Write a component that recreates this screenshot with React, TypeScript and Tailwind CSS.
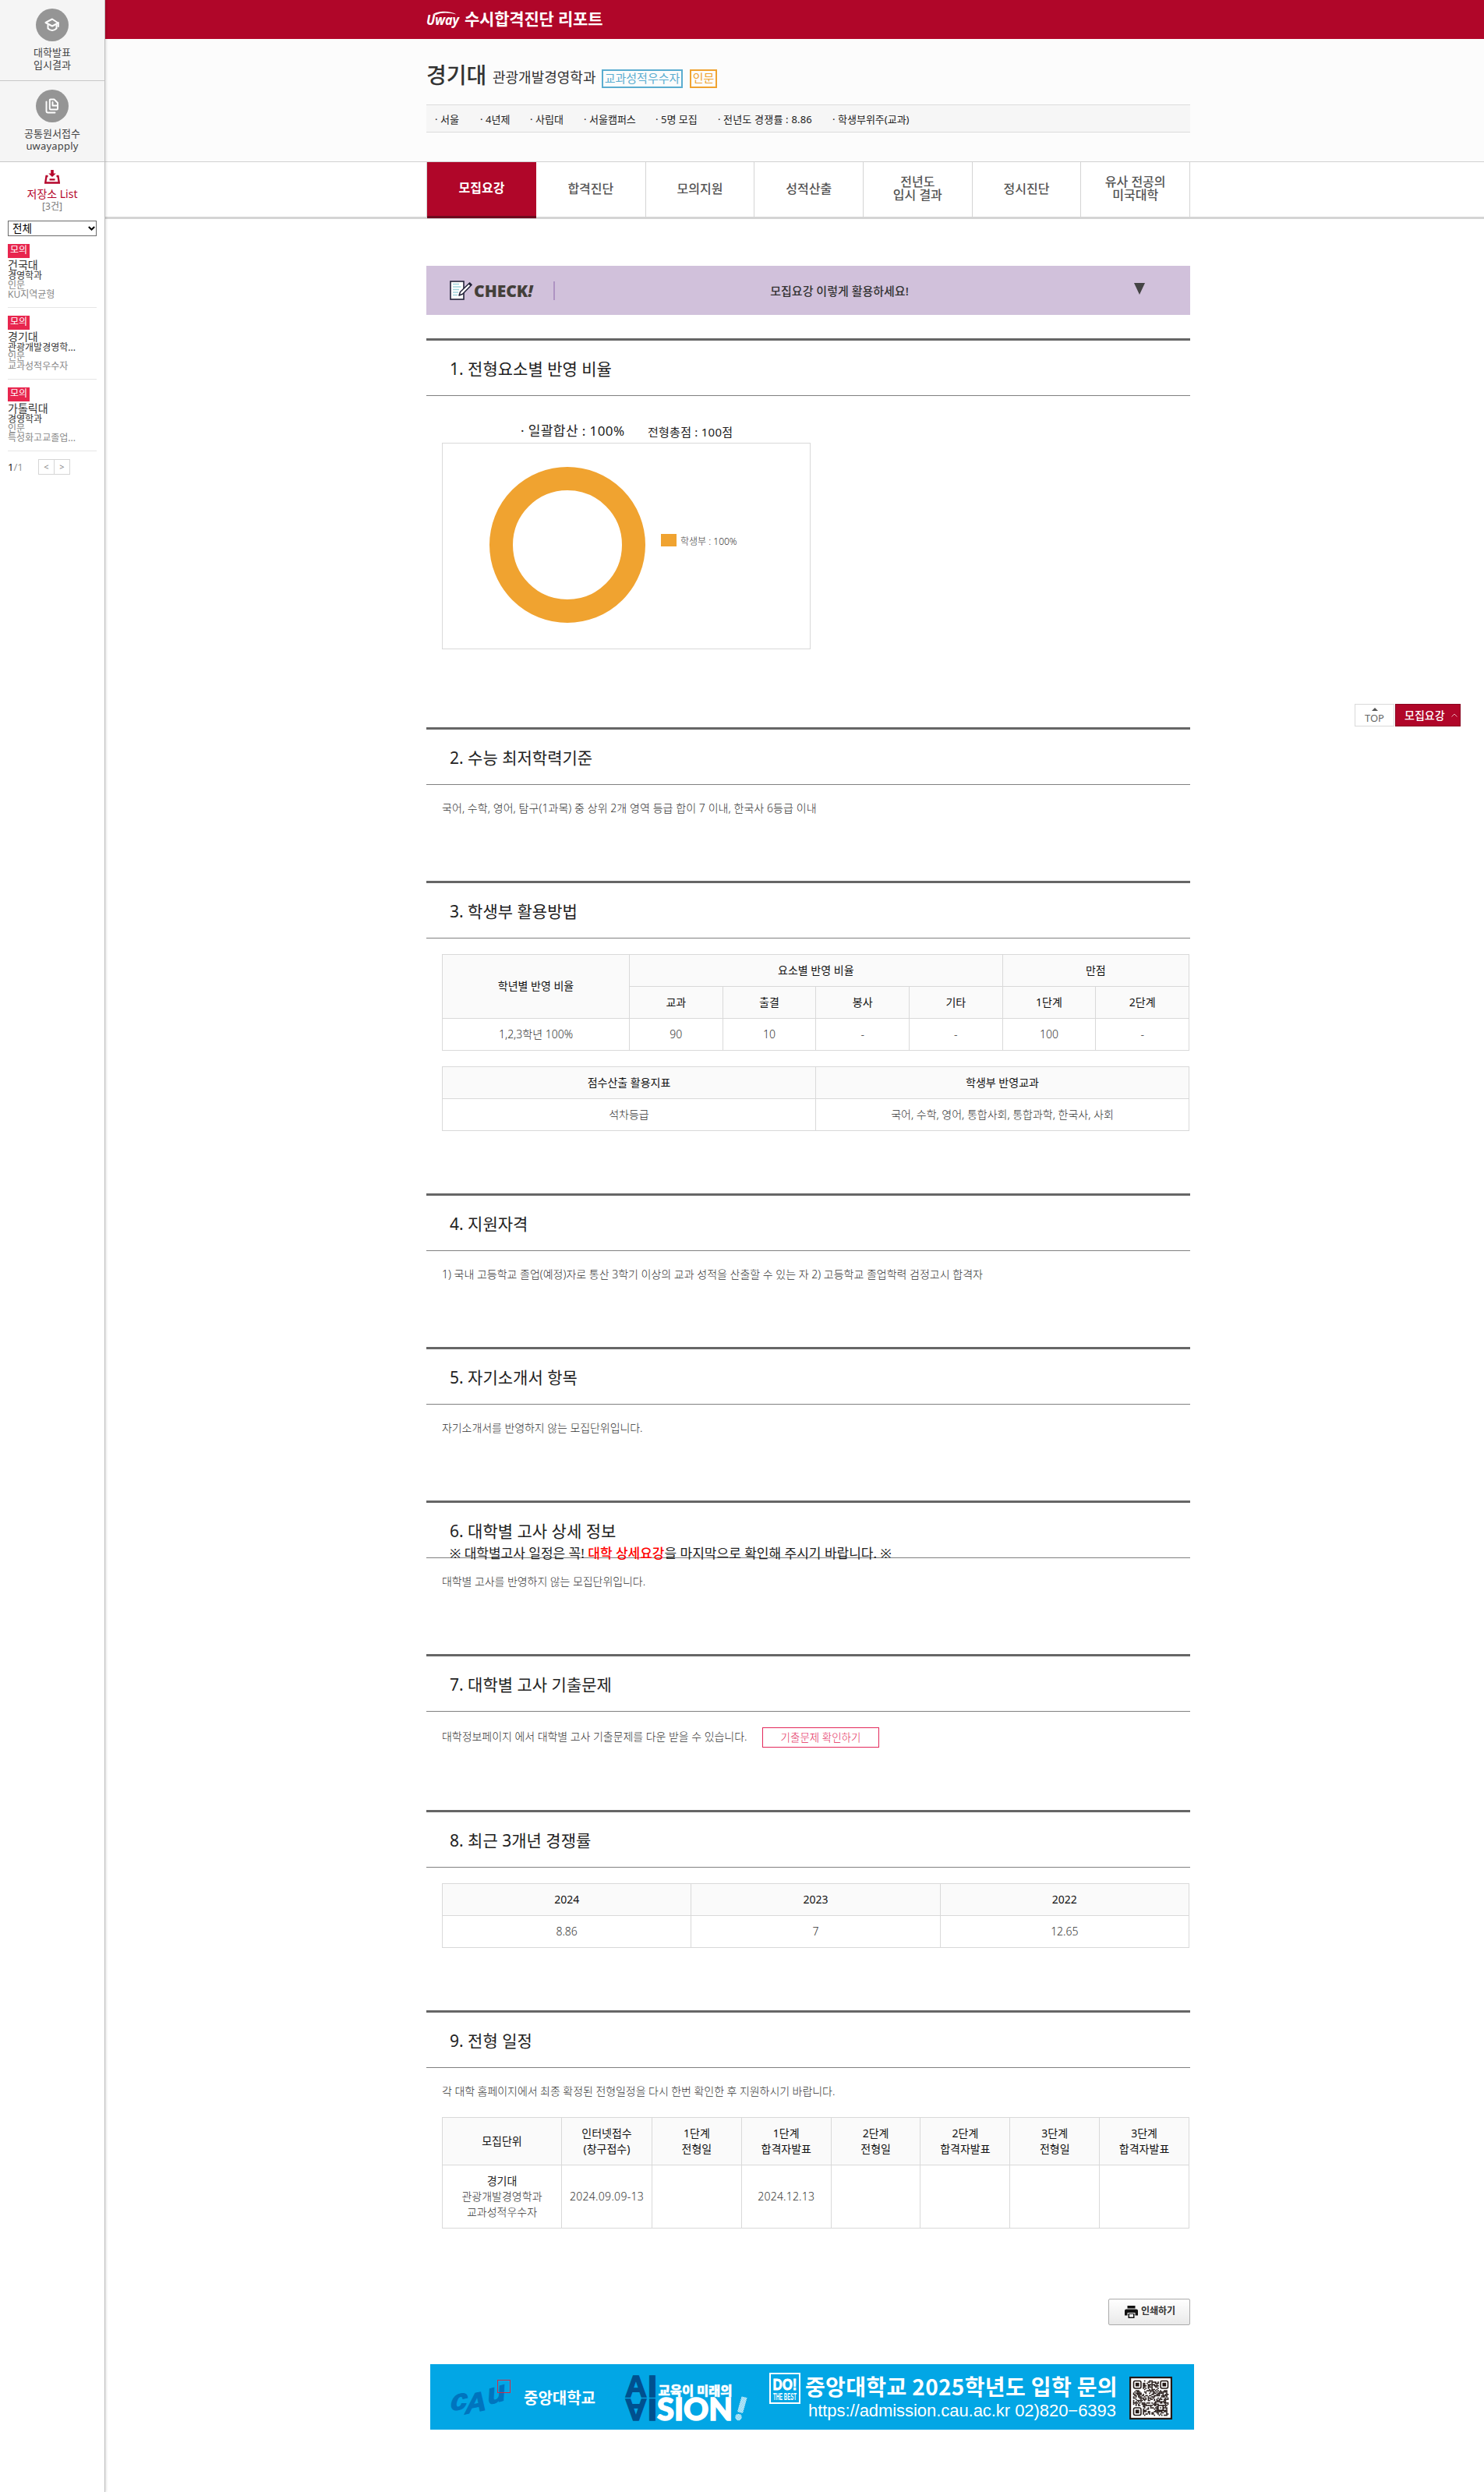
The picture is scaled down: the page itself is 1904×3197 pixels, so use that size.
import React from "react";

const tabs = ["합격진단", "모의지원", "성적산출", "전년도\n입시 결과", "정시진단", "유사 전공의\n미국대학"];

const facts = [
  { text: "서울", cls: "w-[58px]" },
  { text: "4년제", cls: "w-[64px]" },
  { text: "사립대", cls: "w-[69px]" },
  { text: "서울캠퍼스", cls: "w-[92px]" },
  { text: "5명 모집", cls: "w-[80px]" },
  { text: "전년도 경쟁률 : 8.86", cls: "w-[147px] tracking-[0.2px]" },
  { text: "학생부위주(교과)", cls: "" },
];

const saved = [
  { univ: "건국대", dept: "경영학과", type: "KU지역균형" },
  { univ: "경기대", dept: "관광개발경영학...", type: "교과성적우수자" },
  { univ: "가톨릭대", dept: "경영학과", type: "특성화고교졸업..." },
];

const schedule = [
  "인터넷접수\n(창구접수)",
  "1단계\n전형일",
  "1단계\n합격자발표",
  "2단계\n전형일",
  "2단계\n합격자발표",
  "3단계\n전형일",
  "3단계\n합격자발표",
];

function Section({ title, height, note, children }: { title: string; height: string; note?: React.ReactNode; children: React.ReactNode }) {
  return (
    <section className={height}>
      <div className="relative h-[74px] border-t-[3px] border-b border-t-[#666] border-b-[#808080] pl-[30px]">
        <h2 className="pt-px text-[21px] leading-[70px] text-[#222]">{title}</h2>
        {note}
      </div>
      <div className="pl-5">{children}</div>
    </section>
  );
}

function Body({ children, cls = "pt-[19px]" }: { children: React.ReactNode; cls?: string }) {
  return <p className={"text-[14px] leading-[22px] font-light whitespace-nowrap text-[#333] " + cls}>{children}</p>;
}

function Th({ children, ...rest }: React.ThHTMLAttributes<HTMLTableCellElement>) {
  return (
    <th {...rest} className="border border-[#d9d9d9] bg-[#fafafa] p-0 pb-px text-[14px] leading-5 font-normal whitespace-pre-line text-[#111]">
      {children}
    </th>
  );
}

function Td({ children }: { children?: React.ReactNode }) {
  return <td className="border border-[#d9d9d9] p-0 pb-px text-center text-[14px] leading-5 font-light whitespace-pre-line text-[#333]">{children}</td>;
}

function UwayLogo() {
  return (
    <svg width="44" height="24" viewBox="0 0 44 24" className="shrink-0 overflow-visible">
      <text x="0" y="18" fontSize="18" fontWeight="700" fontStyle="italic" fill="#fff" fontFamily="'Open Sans', sans-serif" textLength="42" lengthAdjust="spacingAndGlyphs">
        Uway
      </text>
      <path d="M8 4.500C14 0 30 -1 38.500 4.500 30 1.800 19 1.500 12.500 5Z" fill="#fff" />
    </svg>
  );
}

function CapIcon() {
  return (
    <svg width="20" height="18" viewBox="0 0 20 18" fill="none" stroke="#fff" strokeWidth="2" strokeLinejoin="round" strokeLinecap="round">
      <path d="M10 1.500 1.500 6 10 10.500 17.500 6.500Z" />
      <path d="M17.800 6v5M4.500 9v4.500Q10 18.500 15.500 13.500V9" />
    </svg>
  );
}

function FilesIcon() {
  return (
    <svg width="18" height="20" viewBox="0 0 18 20" fill="none" stroke="#fff" strokeWidth="1.900" strokeLinejoin="round" strokeLinecap="round">
      <path d="M5.800 2.500Q5.800 1.500 6.800 1.500h4.700l4.500 4.500v7.500q0 1-1 1H6.800q-1 0-1-1Z" />
      <path d="M9.500 5v4.500H15" />
      <path d="M1.500 4.500v12Q1.500 18.500 3.500 18.500H12.500" />
    </svg>
  );
}

function SaveIcon() {
  return (
    <svg width="20" height="18" viewBox="0 0 20 18">
      <path d="M8.200 0h3.600v4.500h2.900L10 9 5.300 4.500h2.900Z" fill="#b5062b" />
      <path d="M4.500 8H2.500L1.200 16.500H18.800L17.500 8H15.500M6.500 12.300h7" fill="none" stroke="#b5062b" strokeWidth="2.300" />
    </svg>
  );
}

function CheckIcon() {
  return (
    <svg width="29" height="25" viewBox="0 0 29 25">
      <rect x="1" y="1" width="17" height="23" fill="#fff" stroke="#23233a" strokeWidth="1.600" />
      <path d="M4 4.500h8M4 8h10.500M4 11.500h8M4 15h7M4 18.500h6" stroke="#9fd3dc" strokeWidth="1.500" />
      <path d="M25.500 3 13.500 14.500l-1.500 4.500 4.500-1.700L28 5.500Z" fill="#fff" stroke="#23233a" strokeWidth="1.500" strokeLinejoin="round" />
      <path d="M24 4.500 26.800 7.200 28.600 5 25.800 2.200Z" fill="#23233a" />
    </svg>
  );
}

function Donut() {
  return (
    <svg width="200" height="200" viewBox="0 0 200 200" className="mb-[3px]">
      <circle cx="100" cy="100" r="85" fill="none" stroke="#f0a330" strokeWidth="30" />
    </svg>
  );
}

function CauLogo() {
  return (
    <svg width="84" height="50" viewBox="0 0 84 50" className="overflow-visible">
      <g fill="#0074be" stroke="#0074be" strokeWidth="1.200" fontFamily="'Liberation Sans', sans-serif" fontStyle="italic" fontWeight="700">
        <text transform="translate(1 42) rotate(-10) skewX(-12)" fontSize="36" textLength="22" lengthAdjust="spacingAndGlyphs">c</text>
        <text transform="translate(20 46) rotate(-12) skewX(-10)" fontSize="34" textLength="28" lengthAdjust="spacingAndGlyphs">A</text>
        <text transform="translate(50 34) rotate(-16) skewX(-8)" fontSize="36" textLength="24" lengthAdjust="spacingAndGlyphs">u</text>
      </g>
      <rect x="61.500" y="2.500" width="16" height="16" fill="none" stroke="#d22d45" />
    </svg>
  );
}

function AisionLogo() {
  return (
    <svg width="160" height="62" viewBox="0 0 160 62" className="overflow-visible">
      <defs>
        <pattern id="dots" width="2" height="2" patternUnits="userSpaceOnUse">
          <rect width="2" height="2" fill="#4dc0ec" />
          <rect width="1" height="1" fill="#fff" />
          <rect x="1" y="1" width="1" height="1" fill="#fff" />
        </pattern>
      </defs>
      <g fill="#00508f" stroke="#00508f" strokeWidth="1.500" fontFamily="'Liberation Sans', sans-serif" fontWeight="700" fontSize="39">
        <text x="1" y="29.500" textLength="28" lengthAdjust="spacingAndGlyphs">A</text>
        <text x="30" y="29.500" textLength="12" lengthAdjust="spacingAndGlyphs">I</text>
        <g transform="translate(0 62) scale(1 -1)">
          <text x="1" y="29.500" textLength="28" lengthAdjust="spacingAndGlyphs">A</text>
          <text x="30" y="29.500" textLength="12" lengthAdjust="spacingAndGlyphs">I</text>
        </g>
      </g>
      <text x="43.500" y="28" fill="#fff" stroke="#fff" strokeWidth=".4" fontFamily="'Noto Sans CJK KR', sans-serif" fontWeight="900" fontSize="16" textLength="95" lengthAdjust="spacingAndGlyphs">
        교육이 미래의
      </text>
      <text x="42" y="60" fill="#fff" stroke="#fff" strokeWidth="1.500" fontFamily="'Lato', sans-serif" fontWeight="900" fontSize="39.500" textLength="97" lengthAdjust="spacingAndGlyphs">
        SION
      </text>
      <path d="M150.500 29.500 157.500 31 152 51 145 49Z" fill="url(#dots)" />
      <circle cx="146.500" cy="56" r="4.200" fill="url(#dots)" />
    </svg>
  );
}

function QrCode() {
  const n = 29;
  const cells: React.ReactNode[] = [];
  let seed = 20258;
  const inFinder = (x: number, y: number) => (x < 8 && y < 8) || (x > 20 && y < 8) || (x < 8 && y > 20) || (x > 19 && x < 25 && y > 19 && y < 25);
  for (let y = 0; y < n; y++)
    for (let x = 0; x < n; x++) {
      seed = (seed * 1103515245 + 12345) % 2147483648;
      if (!inFinder(x, y) && (seed >> 12) % 100 < 52) cells.push(<rect key={`${x}-${y}`} x={x} y={y} width="1.050" height="1.050" />);
    }
  return (
    <svg width="55" height="55" viewBox="-3 -3 35 35" fill="#231815" className="shrink-0">
      <rect x="-3" y="-3" width="35" height="35" />
      <rect x="-1.600" y="-1.600" width="32.200" height="32.200" fill="#fff" />
      {cells}
      {[[0, 0], [22, 0], [0, 22]].map(([x, y]) => (
        <g key={`${x}${y}`}>
          <rect x={x + 0.5} y={y + 0.5} width="6" height="6" rx="1.200" fill="none" stroke="#231815" />
          <rect x={x + 2} y={y + 2} width="3" height="3" />
        </g>
      ))}
      <rect x="20.500" y="20.500" width="4" height="4" fill="none" stroke="#231815" />
      <rect x="22" y="22" width="1" height="1" />
    </svg>
  );
}

function Sidebar() {
  return (
    <aside className="z-10 w-[135px] shrink-0 border-r border-[#bfbfbf] bg-white shadow-[1px_0_3px_rgba(0,0,0,0.15)]">
      <div className="h-[104px] border-b border-[#c8c8c8] bg-[#f5f5f5] pt-[11px] text-center text-[13px] leading-4 text-[#444]">
        <div className="mx-auto mb-[6px] flex size-[42px] items-center justify-center rounded-full bg-[#959595]">
          <CapIcon />
        </div>
        대학발표
        <br />
        입시결과
      </div>
      <div className="h-[104px] border-b border-[#c8c8c8] bg-[#f5f5f5] pt-[11px] text-center text-[13px] leading-4 text-[#444]">
        <div className="mx-auto mb-[6px] flex size-[42px] items-center justify-center rounded-full bg-[#959595]">
          <FilesIcon />
        </div>
        공통원서접수
        <br />
        <span className="tracking-[0.2px]">uwayapply</span>
      </div>
      <div className="flex h-[75px] flex-col items-center pt-[10px]">
        <SaveIcon />
        <p className="mt-[4px] text-[14px] leading-[18px] text-[#b5062b]">저장소 List</p>
        <p className="text-[12px] leading-[14px] text-[#777]">[3건]</p>
      </div>
      <div className="ml-[10px] w-[114px]">
        <div className="flex h-5 items-center justify-between border border-[#6b6b6b] bg-white pr-px pl-[5px] text-[13.500px] leading-[18px] text-black">
          전체
          <svg width="9" height="6" viewBox="0 0 9 6" fill="none" stroke="#000" strokeWidth="2">
            <path d="M.8 1 4.500 4.500 8.200 1" />
          </svg>
        </div>
        {saved.map((s) => (
          <div key={s.univ} className="h-[92px] border-b border-[#e5e5e5] pt-[10px] text-[12px] leading-3 whitespace-nowrap">
            <span className="flex h-[18px] w-7 justify-center bg-[#e8264e] text-[12px] leading-[15px] text-white">모의</span>
            <p className="mt-[2px] text-[14px] leading-[14px] text-[#333]">{s.univ}</p>
            <p className="mt-px text-[12px] leading-3 text-[#333]">{s.dept}</p>
            <p className="text-[12px] leading-3 text-[#888]">{"인문"}</p>
            <p className="text-[12px] leading-3 text-[#888]">{s.type}</p>
          </div>
        ))}
        <div className="mt-[10px] flex items-center">
          <p className="w-[39px] text-[13px] leading-5 text-[#999]">
            <span className="text-[#222]">1</span>/1
          </p>
          <span className="h-5 w-[21px] border border-[#d5d5d5] text-center text-[11px] leading-[18px] text-[#888]">&lt;</span>
          <span className="-ml-px h-5 w-[21px] border border-[#d5d5d5] text-center text-[11px] leading-[18px] text-[#888]">&gt;</span>
        </div>
      </div>
    </aside>
  );
}

export default function App() {
  return (
    <div className="relative flex h-[3197px] w-[1904px] overflow-hidden bg-white font-['Noto_Sans','Noto_Sans_CJK_KR',sans-serif]">
      <Sidebar />
      <div className="flex-1">
        <header className="h-[50px] bg-[#b00629] pl-[412px]">
          <div className="flex items-start pt-[14px]">
            <UwayLogo />
            <h1 className="-mt-px ml-[5px] text-[21px] leading-[22px] font-bold tracking-[-0.200px] text-white">수시합격진단 리포트</h1>
          </div>
        </header>

        <div className="h-[158px] border-b border-[#d2d2d2] bg-[#fcfcfc] pl-[412px]">
          <div className="flex items-start pt-[31px] whitespace-nowrap text-[#333]">
            <h2 className="w-[85px] text-[28px] leading-[30px] font-medium">경기대</h2>
            <p className="w-[140px] pt-[6px] text-[18px] leading-6">관광개발경영학과</p>
            <span className="mt-2 h-6 w-[104px] border-2 border-[#5badd0] text-center text-[15px] leading-[18px] text-[#5badd0]">교과성적우수자</span>
            <span className="mt-2 ml-[9px] h-6 w-[35px] border-2 border-[#f0a330] text-center text-[15px] leading-[18px] text-[#f0a330]">인문</span>
          </div>
          <ul className="mt-[21px] flex h-9 w-[980px] border-y border-[#dcdcdc] bg-[#f6f6f6] pl-[11px] text-[13px] leading-[36px] whitespace-nowrap text-[#222]">
            {facts.map((f) => (
              <li key={f.text} className={f.cls}>
                <span className="inline-block w-[7px]">·</span>
                {f.text}
              </li>
            ))}
          </ul>
        </div>

        <nav className="h-[73px] border-b-[3px] border-[#d4d4d4] pl-[412px]">
          <div className="flex h-[70px] w-[980px] border-x border-[#d4d4d4] text-center text-[16px] leading-[17px] font-medium whitespace-pre-line text-[#555]">
            <div className="flex h-[72px] w-[140px] items-center justify-center border-b-[3px] border-[#6d0a1e] bg-[#b00629] pb-[2px] font-bold text-white">모집요강</div>
            <div className="grid flex-1 grid-cols-6">
              {tabs.map((t, i) => (
                <div key={t} className={"flex items-center justify-center pb-[2px] " + (i === 0 ? "" : "border-l border-[#d4d4d4]")}>
                  {t}
                </div>
              ))}
            </div>
          </div>
        </nav>

        <main className="ml-[412px] w-[980px] pt-[60px]">
          <div className="mb-[30px] flex h-[63px] items-center bg-[#d1c1db] pl-[30px] text-[#333]">
            <CheckIcon />
            <span className="ml-[2px] w-[81px] text-[21px] leading-6 font-extrabold text-[#44403a] font-['Open_Sans',sans-serif]">
              CHECK<i>!</i>
            </span>
            <span className="ml-[21px] h-6 w-[2px] bg-[#ae93c2]" />
            <p className="w-[730px] text-center text-[15px] leading-6 font-medium">모집요강 이렇게 활용하세요!</p>
            <svg width="14" height="15" viewBox="0 0 14 15" className="ml-[13px] mb-1">
              <path d="M0 0h14L7 15Z" fill="#444" />
            </svg>
          </div>

          <Section title="1. 전형요소별 반영 비율" height="h-[499px]">
            <div className="flex pt-[33px] pl-[101px] leading-6 whitespace-nowrap text-[#222]">
              <p className="w-[163px] text-[17px] tracking-[0.400px]">· 일괄합산 : 100%</p>
              <p className="pt-px text-[15px] tracking-[0.250px]">전형총점 : 100점</p>
            </div>
            <div className="mt-[2px] flex h-[265px] w-[473px] items-center border border-[#d9d9d9] pl-[60px]">
              <Donut />
              <span className="mb-[16px] ml-5 h-4 w-5 bg-[#f0a330]" />
              <span className="mb-[11px] ml-[5px] text-[12px] leading-4 font-light text-[#333]">학생부 : 100%</span>
            </div>
          </Section>

          <Section title="2. 수능 최저학력기준" height="h-[197px]">
            <Body cls="pt-[19px] tracking-[0.070px]">국어, 수학, 영어, 탐구(1과목) 중 상위 2개 영역 등급 합이 7 이내, 한국사 6등급 이내</Body>
          </Section>

          <Section title="3. 학생부 활용방법" height="h-[401px]">
            <table className="mt-5 w-[959px] table-fixed border-collapse">
              <colgroup>
                <col className="w-[240px]" />
                {[0, 1, 2, 3, 4, 5].map((c) => (
                  <col key={c} />
                ))}
              </colgroup>
              <tbody>
                <tr className="h-[41px]">
                  <Th rowSpan={2}>학년별 반영 비율</Th>
                  <Th colSpan={4}>요소별 반영 비율</Th>
                  <Th colSpan={2}>만점</Th>
                </tr>
                <tr className="h-[41px]">
                  {["교과", "출결", "봉사", "기타", "1단계", "2단계"].map((t) => (
                    <Th key={t}>{t}</Th>
                  ))}
                </tr>
                <tr className="h-[41px]">
                  {["1,2,3학년 100%", "90", "10", "-", "-", "100", "-"].map((t, i) => (
                    <Td key={i}>{t}</Td>
                  ))}
                </tr>
              </tbody>
            </table>
            <table className="mt-5 w-[959px] table-fixed border-collapse">
              <tbody>
                <tr className="h-[41px]">
                  <Th>점수산출 활용지표</Th>
                  <Th>학생부 반영교과</Th>
                </tr>
                <tr className="h-[41px]">
                  <Td>석차등급</Td>
                  <Td>국어, 수학, 영어, 통합사회, 통합과학, 한국사, 사회</Td>
                </tr>
              </tbody>
            </table>
          </Section>

          <Section title="4. 지원자격" height="h-[197px]">
            <Body>1) 국내 고등학교 졸업(예정)자로 통산 3학기 이상의 교과 성적을 산출할 수 있는 자 2) 고등학교 졸업학력 검정고시 합격자</Body>
          </Section>

          <Section title="5. 자기소개서 항목" height="h-[197px]">
            <Body cls="pt-[19px] tracking-[-0.070px]">자기소개서를 반영하지 않는 모집단위입니다.</Body>
          </Section>

          <Section
            title="6. 대학별 고사 상세 정보"
            height="h-[197px]"
            note={
              <p className="absolute top-[53px] left-[30px] text-[17px] leading-6 whitespace-nowrap text-[#222]">
                ※ 대학별고사 일정은 꼭! <span className="font-medium text-[#f00]">대학 상세요강</span>을 마지막으로 확인해 주시기 바랍니다. ※
              </p>
            }
          >
            <Body cls="pt-[19px] tracking-[-0.070px]">대학별 고사를 반영하지 않는 모집단위입니다.</Body>
          </Section>

          <Section title="7. 대학별 고사 기출문제" height="h-[200px]">
            <div className="flex items-start">
              <div className="w-[411px]">
                <Body cls="pt-[21px] tracking-[-0.050px]">대학정보페이지 에서 대학별 고사 기출문제를 다운 받을 수 있습니다.</Body>
              </div>
              <button className="mt-5 h-[26px] w-[150px] border border-[#e3295b] text-[13.500px] leading-[22px] font-light text-[#e3295b]">기출문제 확인하기</button>
            </div>
          </Section>

          <Section title="8. 최근 3개년 경쟁률" height="h-[257px]">
            <table className="mt-5 w-[959px] table-fixed border-collapse">
              <tbody>
                <tr className="h-[41px]">
                  <Th>2024</Th>
                  <Th>2023</Th>
                  <Th>2022</Th>
                </tr>
                <tr className="h-[41px]">
                  <Td>8.86</Td>
                  <Td>7</Td>
                  <Td>12.65</Td>
                </tr>
              </tbody>
            </table>
          </Section>

          <Section title="9. 전형 일정" height="h-[370px]">
            <Body cls="pt-[19px] tracking-[-0.060px]">각 대학 홈페이지에서 최종 확정된 전형일정을 다시 한번 확인한 후 지원하시기 바랍니다.</Body>
            <table className="mt-[22px] w-[959px] table-fixed border-collapse">
              <colgroup>
                <col className="w-[153px]" />
                <col className="w-[116px]" />
                {[0, 1, 2, 3, 4, 5].map((c) => (
                  <col key={c} />
                ))}
              </colgroup>
              <tbody>
                <tr className="h-[61px]">
                  <Th>모집단위</Th>
                  {schedule.map((t) => (
                    <Th key={t}>{t}</Th>
                  ))}
                </tr>
                <tr className="h-[81px]">
                  <Td>
                    <span className="font-normal text-[#222]">경기대</span>
                    {"\n관광개발경영학과\n교과성적우수자"}
                  </Td>
                  <Td>
                    <span className="tracking-[0.300px]">2024.09.09-13</span>
                  </Td>
                  <Td />
                  <Td>
                    <span className="tracking-[0.200px]">2024.12.13</span>
                  </Td>
                  <Td />
                  <Td />
                  <Td />
                  <Td />
                </tr>
              </tbody>
            </table>
          </Section>

          <div className="flex justify-end">
            <button className="flex h-[34px] w-[105px] items-center rounded-[2px] border border-[#ababab] bg-linear-to-b from-white to-[#e9e9e9] pl-5 text-[12px] font-bold text-[#333]">
              <svg width="17" height="16" viewBox="0 0 17 16">
                <path d="M3.500 0h10v3.500h-10ZM2 4.500h13q2 0 2 2v6h-3.500V9h-10v3.500H0v-6q0-2 2-2ZM4.500 10h8v6h-8Z" fill="#111" />
                <path d="M6 11h5v3.500H6Z" fill="#fff" />
              </svg>
              <span className="mb-[3px] ml-1 leading-4">인쇄하기</span>
            </button>
          </div>

          <div className="mt-[50px] ml-[5px] flex h-[84px] w-[980px] items-start bg-[#02a6e5] text-white">
            <div className="mt-[18px] ml-[25px] w-[84px] shrink-0">
              <CauLogo />
            </div>
            <p className="mt-[31px] ml-[11px] w-[129px] shrink-0 text-[20px] leading-[26px] font-bold whitespace-nowrap">중앙대학교</p>
            <div className="mt-[12px] w-[186px] shrink-0">
              <AisionLogo />
            </div>
            <div className="mt-[11px] h-10 w-10 shrink-0 border-2 border-white">
              <svg width="36" height="36" viewBox="0 0 36 36" fill="#fff" stroke="#fff" fontFamily="'Liberation Sans', sans-serif" fontWeight="700" className="overflow-visible">
                <text x="2.500" y="20" fontSize="21" strokeWidth=".8" textLength="31" lengthAdjust="spacingAndGlyphs">DO!</text>
                <text x="3" y="32.500" fontSize="12.500" strokeWidth="0" textLength="30" lengthAdjust="spacingAndGlyphs">THE BEST</text>
              </svg>
            </div>
            <div className="mt-[13px] ml-[6px] w-[416px] shrink-0 whitespace-nowrap">
              <p className="text-[28px] leading-[31px] font-bold tracking-[0.350px] font-['Noto_Sans_CJK_KR',sans-serif]">중앙대학교 2025학년도 입학 문의</p>
              <p className="pt-px pl-1 text-[22px] leading-[30px] tracking-[-0.050px] font-['Liberation_Sans',sans-serif]">https://admission.cau.ac.kr 02)820−6393</p>
            </div>
            <div className="mt-4">
              <QrCode />
            </div>
          </div>
        </main>
      </div>

      <div className="absolute top-[903px] left-[1738px] z-20 flex h-[29px]">
        <div className="flex w-[51px] flex-col items-center border border-[#d9d9d9] bg-white pt-1 text-[13px] leading-[18px] text-[#666]">
          <svg width="8" height="4" viewBox="0 0 8 4" className="shrink-0">
            <path d="M0 4 4 0 8 4Z" fill="#555" />
          </svg>
          TOP
        </div>
        <div className="ml-px flex w-[84px] items-center border border-[#8a0420] bg-[#b00629] pl-[11px] text-[14px] leading-[26px] font-medium text-white">
          모집요강
          <svg width="8" height="5" viewBox="0 0 8 5" fill="none" stroke="#e8a5b2" className="ml-2">
            <path d="M.5 4.500 4 1 7.500 4.500" />
          </svg>
        </div>
      </div>
    </div>
  );
}
